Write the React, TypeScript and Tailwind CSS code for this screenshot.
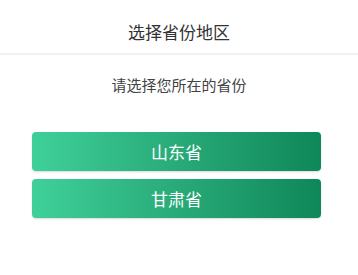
import { useState } from 'react';

const provinces = ['山东省', '甘肃省'];

export default function App() {
  const [picked, setPicked] = useState<string | null>(null);

  return (
    <div className="min-h-[275px] w-full bg-white font-['Noto_Sans_CJK_SC','Noto_Sans',sans-serif]">
      <header className="border-b-2 border-[#f1f1f1] pt-[22px] pb-[12px] text-center text-[17px] leading-[19px] text-[#333]">
        选择省份地区
      </header>

      <p className="mt-[20px] text-center text-[15px] leading-[20px] text-[#444]">请选择您所在的省份</p>

      <div className="mt-[37px] ml-[32px] flex w-[289px] flex-col gap-[8px]">
        {provinces.map((p) => (
          <button
            key={p}
            type="button"
            onClick={() => setPicked(p)}
            className={`h-[39px] rounded-[4px] bg-gradient-to-r from-[#3fd09a] to-[#0e8759] text-[17px] leading-none text-white shadow-[0_1px_2px_rgba(0,0,0,0.15)] ${
              picked === p ? 'opacity-90' : ''
            }`}
          >
            {p}
          </button>
        ))}
      </div>
    </div>
  );
}
